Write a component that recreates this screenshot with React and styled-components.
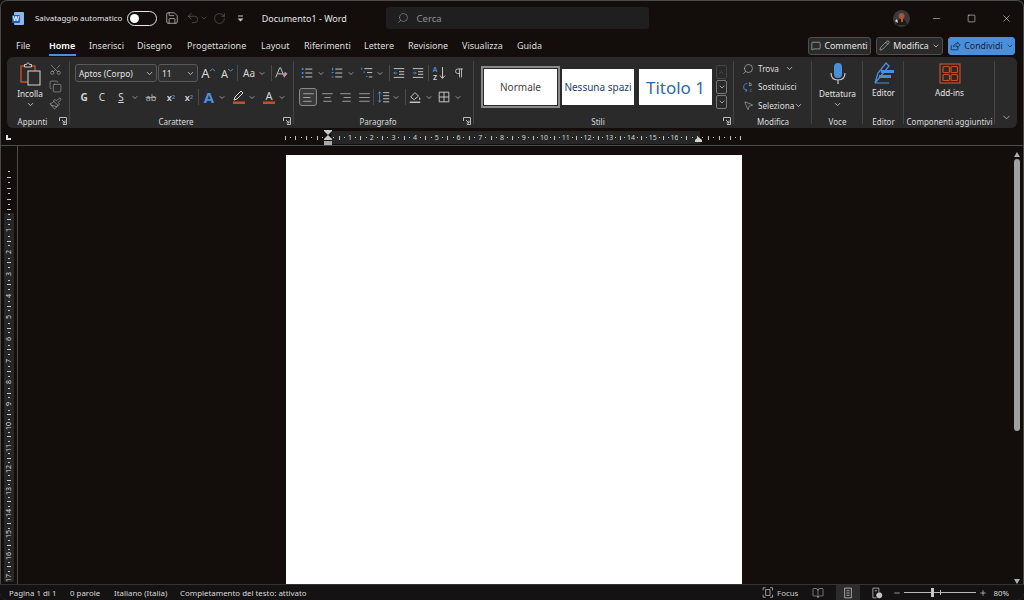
import styled, { createGlobalStyle } from 'styled-components';
import {
  Save, Undo2, RotateCw, Search, Minus, Square, X, MessageSquare, Pencil, ChevronDown,
  Scissors, Copy, Paintbrush, AlignLeft, AlignCenter, AlignRight, AlignJustify, Pilcrow,
  MousePointer2, BookOpen, Plus, ChevronUp,
} from 'lucide-react';

const GlobalStyle = createGlobalStyle`
  html, body { margin: 0; padding: 0; background: #151010; }
  #root { width: 1024px; height: 600px; overflow: hidden; }
  * { box-sizing: border-box; }
`;

const blue = '#4a8fdc';
const rust = '#c4502a';

// ── Window ──────────────────────────────────────────
const Win = styled.div`
  width: 1024px;
  height: 600px;
  display: flex;
  flex-direction: column;
  background: #130d0c;
  color: #e4e4e4;
  font-family: "Noto Sans", "Open Sans", sans-serif;
  font-size: 9px;
  border-radius: 7px;
  box-shadow: inset 0 0 0 1px #4a4a4a;
  overflow: hidden;
`;

// ── Title bar ───────────────────────────────────────
const TitleBar = styled.div`
  height: 36px;
  flex: none;
  display: flex;
  align-items: center;
  padding-left: 12px;
`;

const AutoLabel = styled.span`
  margin-left: 11px;
  width: 92px;
  font-size: 7.9px;
  white-space: nowrap;
`;

const Toggle = styled.div`
  width: 30px;
  height: 15px;
  border: 1px solid #e8e8e8;
  border-radius: 8px;
  padding: 2px 0 0 2px;
  margin-right: 8px;
`;

const Knob = styled.div`
  width: 9px;
  height: 9px;
  border-radius: 50%;
  background: #fff;
`;

const TitleIcon = styled.div`
  width: ${(p) => p.$w || 16}px;
  margin-left: ${(p) => p.$ml || 0}px;
  display: flex;
  align-items: center;
  justify-content: center;
  color: ${(p) => (p.$dim ? '#5c5c5c' : '#c8c8c8')};
`;

const DocTitle = styled.span`
  margin-left: 16px;
  width: 124px;
  white-space: nowrap;
`;

const SearchBox = styled.div`
  width: 264px;
  height: 22px;
  background: #1f1f1f;
  border-radius: 3px;
  display: flex;
  align-items: center;
  gap: 8px;
  padding-left: 11px;
  color: #8f8f8f;
  font-size: 9.5px;
`;

const Avatar = styled.div`
  margin-left: 244px;
  width: 17px;
  height: 17px;
  display: flex;
`;

const WinBtn = styled.div`
  width: 35px;
  margin-left: ${(p) => p.$ml || 0}px;
  display: flex;
  justify-content: center;
  color: #e4e4e4;
`;

// ── Tabs ────────────────────────────────────────────
const TabRow = styled.div`
  height: 21px;
  flex: none;
  display: flex;
  align-items: center;
  padding: 0 9px 2px 16px;
`;

const Tab = styled.span`
  width: ${(p) => p.$w}px;
  font-size: 9px;
  white-space: nowrap;
  position: relative;
  font-weight: ${(p) => (p.$on ? 600 : 400)};
  color: ${(p) => (p.$on ? '#fff' : '#dedede')};
  padding-bottom: 1px;

  ${(p) => p.$on && `
    &::after {
      content: '';
      position: absolute;
      left: 0;
      bottom: -3px;
      width: 27px;
      height: 2px;
      background: ${blue};
    }
  `}
`;

const TabActions = styled.div`
  margin-left: auto;
  display: flex;
  gap: 5px;
`;

const ActionBtn = styled.div`
  width: ${(p) => p.$w}px;
  height: 18px;
  border-radius: 3px;
  display: flex;
  align-items: center;
  justify-content: center;
  gap: 3px;
  font-size: 8.8px;
  background: ${(p) => (p.$primary ? blue : '#2a2a2a')};
  border: 1px solid ${(p) => (p.$primary ? blue : '#4e4e4e')};
  color: ${(p) => (p.$primary ? '#12243a' : '#e4e4e4')};
`;

// ── Ribbon ──────────────────────────────────────────
const Ribbon = styled.div`
  height: 71px;
  flex: none;
  margin: 0 7px;
  background: #2a2a2a;
  border-radius: 6px;
  display: flex;
`;

const Group = styled.div`
  width: ${(p) => p.$w}px;
  flex: none;
  position: relative;
  display: flex;
  flex-direction: column;

  &::after {
    content: '';
    position: absolute;
    right: 0;
    top: 4px;
    bottom: 4px;
    width: 1px;
    background: #454545;
  }
`;

const GroupBody = styled.div`
  height: 57px;
  padding-left: ${(p) => p.$pl || 0}px;
  padding-top: ${(p) => p.$pt ?? 7}px;
  display: flex;
  flex-direction: ${(p) => (p.$row ? 'row' : 'column')};
  gap: ${(p) => p.$gap ?? 6}px;
`;

const GroupLabel = styled.div`
  height: 14px;
  position: relative;
  text-align: center;
  font-size: 8px;
  line-height: 15px;
  padding-right: ${(p) => (p.$launch ? 12 : 0)}px;
  color: #dcdcdc;
  white-space: nowrap;
`;

const Launcher = styled.span`
  position: absolute;
  right: 3px;
  top: 3px;
  display: flex;
  color: #b8b8b8;
`;

const ToolRow = styled.div`
  height: 18px;
  display: flex;
  align-items: center;
`;

const Tool = styled.div`
  width: ${(p) => p.$w || 18}px;
  height: 18px;
  flex: none;
  margin-left: ${(p) => p.$ml || 0}px;
  display: flex;
  align-items: center;
  justify-content: center;
  font-size: ${(p) => p.$fs || 10}px;
  font-weight: ${(p) => p.$fw || 400};
  color: #d6d6d6;
  border-radius: 3px;
  ${(p) => p.$active && 'background: #3a3a3a; border: 1px solid #8a8a8a;'}
`;

const Caret = styled(Tool).attrs({ $w: 8 })`
  color: #c8c8c8;
`;

const VSep = styled.div`
  width: 1px;
  height: ${(p) => p.$h || 16}px;
  flex: none;
  margin-left: ${(p) => p.$l || 0}px;
  margin-right: ${(p) => p.$r || 0}px;
  background: #4a4a4a;
`;

const Combo = styled.div`
  width: ${(p) => p.$w}px;
  height: 18px;
  flex: none;
  margin-right: 1px;
  border: 1px solid #5a5a5a;
  border-radius: 3px;
  background: #2f2f2f;
  display: flex;
  align-items: center;
  justify-content: space-between;
  padding: 0 2px 0 3px;
  font-size: 8.4px;
  white-space: nowrap;
`;

const BigTool = styled.div`
  flex: 1;
  display: flex;
  flex-direction: column;
  align-items: center;
  padding-top: ${(p) => p.$pt ?? 5}px;
  font-size: 8.2px;
  white-space: nowrap;
`;

const BigLabel = styled.span`
  margin-top: ${(p) => p.$mt ?? 1}px;
  line-height: 13px;
`;

const ClipSide = styled.div`
  width: 14px;
  flex: none;
  margin-right: 8px;
  padding-top: 3px;
  display: flex;
  flex-direction: column;
  align-items: center;
  gap: 4px;
  color: #b8b8b8;
`;

const Gallery = styled.div`
  display: flex;
  align-items: center;
  gap: 5px;
`;

const StyleCard = styled.div`
  width: ${(p) => p.$w}px;
  height: 36px;
  background: #fff;
  display: flex;
  align-items: center;
  justify-content: center;
  font-size: ${(p) => p.$fs}px;
  color: ${(p) => p.$c};
  white-space: nowrap;
  overflow: hidden;
  ${(p) => p.$sel && 'outline: 1px solid #2a2a2a; box-shadow: 0 0 0 3px #8b8b8b;'}
`;

const Spinner = styled.div`
  margin-left: -1px;
  width: 11px;
  display: flex;
  flex-direction: column;
  gap: 1px;
`;

const SpinBtn = styled.div`
  height: 14px;
  border: 1px solid ${(p) => (p.$dim ? '#444' : '#7a7a7a')};
  border-radius: 2px;
  display: flex;
  align-items: center;
  justify-content: center;
  color: ${(p) => (p.$dim ? '#666' : '#ddd')};
`;

const EditRow = styled.div`
  height: 18px;
  padding-left: 8px;
  display: flex;
  align-items: center;
  font-size: 8.2px;
  white-space: nowrap;
  gap: 4px;
  color: #dedede;
`;

const EditIcon = styled.span`
  width: 12px;
  display: flex;
  justify-content: center;
  color: #c8c8c8;
`;

const CollapseBtn = styled.div`
  flex: 1;
  display: flex;
  align-items: flex-end;
  justify-content: center;
  padding-bottom: 5px;
  color: #d0d0d0;
`;

// ── Rulers ──────────────────────────────────────────
const HRuler = styled.div`
  margin-top: 2px;
  height: 15px;
  flex: none;
  padding-left: 284.5px;
  position: relative;
  display: flex;
  align-items: stretch;
`;

const CornerMark = styled.span`
  position: absolute;
  left: 6px;
  top: 5px;
  width: 5px;
  height: 5px;
  border-left: 2px solid #ddd;
  border-bottom: 2px solid #ddd;
`;

const LeadTick = styled.i`
  display: block;
  width: 1px;
  height: 4px;
  flex: none;
  margin: 6px 2px 0 0;
  background: #c4c4c4;
`;

const HCell = styled.div`
  width: 21.73px;
  flex: none;
  display: flex;
  align-items: center;
  margin: 1px 0;
  background: ${(p) => (p.$active ? '#262626' : 'transparent')};
`;

const Slot = styled.span`
  flex: 1;
  display: flex;
  align-items: center;
  justify-content: center;
`;

const HTick = styled.i`
  display: block;
  width: 1px;
  height: ${(p) => (p.$tall ? 4 : 1)}px;
  background: #c4c4c4;
`;

const RulerNum = styled.span`
  font-size: 7px;
  line-height: 8px;
  color: #d6d6d6;
  white-space: nowrap;
`;

const IndentMark = styled.svg`
  position: absolute;
  left: ${(p) => p.$x}px;
  top: 0;
`;

const Rule = styled.div`
  height: 1px;
  flex: none;
  background: #4c4c4c;
`;

const Workspace = styled.div`
  flex: 1;
  min-height: 0;
  display: flex;
`;

const VRuler = styled.div`
  width: 18px;
  flex: none;
  border-right: 1px solid #4c4c4c;
  padding-top: 23.2px;
  overflow: hidden;
  display: flex;
  flex-direction: column;
  align-items: flex-start;
`;

const VCell = styled.div`
  height: 21.73px;
  width: 10px;
  flex: none;
  margin-left: 4px;
  display: flex;
  flex-direction: column;
  background: ${(p) => (p.$active ? '#262626' : 'transparent')};
`;

const VTick = styled.i`
  display: block;
  height: 1px;
  width: ${(p) => (p.$tall ? 4 : 2)}px;
  background: #c4c4c4;
`;

const VNum = styled(RulerNum)`
  transform: rotate(-90deg);
`;

const Canvas = styled.div`
  flex: 1;
  padding: 9px 0 0 268px;
  overflow: hidden;
`;

const Page = styled.div`
  width: 456px;
  height: 100%;
  background: #fff;
`;

const Scroll = styled.div`
  width: 8px;
  flex: none;
  margin-right: 3px;
  padding-top: 6px;
  display: flex;
  flex-direction: column;
  align-items: center;
`;

const ScrollArrow = styled.span`
  width: 0;
  height: 0;
  flex: none;
  border-left: 3px solid transparent;
  border-right: 3px solid transparent;
  ${(p) => (p.$down ? 'border-top: 5px solid #b0b0b0;' : 'border-bottom: 5px solid #b0b0b0;')}
`;

const ScrollThumb = styled.div`
  width: 6px;
  height: 272px;
  margin-top: 2px;
  border-radius: 3px;
  background: #a0a0a0;
`;

const ScrollGap = styled.div`
  flex: 1;
`;

// ── Status bar ──────────────────────────────────────
const StatusBar = styled.div`
  height: 16px;
  flex: none;
  display: flex;
  align-items: center;
  padding-left: 9px;
  font-size: 7.9px;
  color: #d8d8d8;
  background: #141212;
  border-top: 1px solid #333;
`;

const StatusText = styled.span`
  width: ${(p) => p.$w}px;
  white-space: nowrap;
`;

const StatusRight = styled.div`
  margin-left: auto;
  display: flex;
  align-items: center;
  height: 100%;
  padding-right: 15px;
`;

const StatusIcon = styled.div`
  width: ${(p) => p.$w || 24}px;
  height: 100%;
  margin-left: ${(p) => p.$ml || 0}px;
  display: flex;
  align-items: center;
  justify-content: center;
  gap: 3px;
  color: #c8c8c8;
  background: ${(p) => (p.$on ? '#2c2c2c' : 'transparent')};
`;

const Slider = styled.div`
  width: 72px;
  height: 1px;
  margin: 0 3px;
  background: #b8b8b8;
  position: relative;
`;

const SliderThumb = styled.span`
  position: absolute;
  left: 27px;
  top: -4px;
  width: 3px;
  height: 9px;
  background: #c8c8c8;
`;

const SliderMid = styled.span`
  position: absolute;
  left: 36px;
  top: -2px;
  width: 1px;
  height: 5px;
  background: #b8b8b8;
`;

const ZoomPct = styled.span`
  margin-left: 6px;
`;

// ── Drawn icons ─────────────────────────────────────
const Ico = ({ s = 14, vb = 16, children }) => (
  <svg width={s} height={s} viewBox={`0 0 ${vb} ${vb}`} fill="none" stroke="currentColor" strokeWidth="1">
    {children}
  </svg>
);

const WordLogo = () => (
  <svg width="12" height="13" viewBox="0 0 12 13">
    <rect x="2" y="0" width="10" height="13" rx="1" fill="#8db8ee" />
    <rect x="0" y="3" width="8" height="8" rx="1" fill="#1f5cb5" />
    <text x="4" y="9.4" fontSize="6.5" fontWeight="700" fill="#fff" textAnchor="middle" fontFamily="Noto Sans">W</text>
  </svg>
);

const AvatarPic = () => (
  <svg width="17" height="17" viewBox="0 0 17 17">
    <circle cx="8.5" cy="8.5" r="8.5" fill="#3a3838" />
    <circle cx="8.5" cy="6" r="3" fill="#8a5a46" />
    <path d="M3 15c1-5 3-6 5.5-6s4.500 1 5.500 6z" fill="#1c1a1a" />
    <path d="M8 4h2v8H8z" fill="#c4502a" />
    <path d="M2 11l2-2 1 4z" fill="#e8e8e8" />
  </svg>
);

const CustomizeIcon = () => (
  <Ico s={9} vb={9}>
    <path d="M2 2h5" />
    <path d="M1.500 4.500h6l-3 3z" fill="currentColor" stroke="none" />
  </Ico>
);

const ShareIcon = () => (
  <Ico s={12}>
    <path d="M3 7v6h9V9" />
    <path d="M6 9c0-3 2-4 5-4V3l4 3.500L11 10V8c-2 0-4 0-5 1z" />
  </Ico>
);

const PasteIcon = () => (
  <svg width="22" height="24" viewBox="0 0 22 24" fill="none">
    <path d="M2 4h14v16H2z" stroke={rust} strokeWidth="1.400" fill="#2e2a28" />
    <path d="M5.500 5V2.500h2c0-2 3-2 3 0h2V5z" stroke="#d0d0d0" strokeWidth="1" fill="#2a2a2a" />
    <rect x="9" y="9" width="12" height="14" fill="#2a2a2a" stroke="#d6d6d6" />
  </svg>
);

const GrowIcon = ({ up }) => (
  <Tool $fs={up ? 13 : 11}>
    A
    <svg width="5" height="4" viewBox="0 0 5 4" style={{ marginBottom: 7 }}>
      <path d={up ? 'M0 3l2.500-2L5 3' : 'M0 1l2.500 2L5 1'} stroke={blue} fill="none" />
    </svg>
  </Tool>
);

const ClearIcon = () => (
  <Ico>
    <path d="M2 13L6.500 2h1L12 13M4 9h6" />
    <path d="M10 10l3-3 2 2-3 3z" fill="#c58aa8" stroke="#c58aa8" />
  </Ico>
);

const Lines = ({ rows }) => rows.map((r) => <path key={r[1]} d={`M${r[0]} ${r[1]}H${r[2]}`} />);

const BulletsIcon = () => (
  <Ico>
    <rect x="2" y="2.500" width="2" height="2" fill={blue} stroke="none" />
    <rect x="2" y="7" width="2" height="2" fill={blue} stroke="none" />
    <rect x="2" y="11.500" width="2" height="2" fill={blue} stroke="none" />
    <Lines rows={[[6, 3.500, 14], [6, 8, 14], [6, 12.500, 14]]} />
  </Ico>
);

const NumberedIcon = () => (
  <Ico>
    <path d="M3 2v3M2 7.500h2M2 12.500h2" stroke={blue} strokeWidth="1.200" />
    <Lines rows={[[6, 3.500, 14], [6, 8, 14], [6, 12.500, 14]]} />
  </Ico>
);

const MultiIcon = () => (
  <Ico>
    <path d="M2 2v2M4 7h1.500M7 12h1.500" stroke={blue} strokeWidth="1.200" />
    <Lines rows={[[5, 3, 14], [8, 7.500, 14], [10, 12.500, 14]]} />
  </Ico>
);

const IndentIcon = ({ grow }) => (
  <Ico>
    <Lines rows={[[2, 3, 14], [8, 6.500, 14], [8, 9.500, 14], [2, 13, 14]]} />
    <path d={grow ? 'M2 8h4M4.500 6.500L6 8 4.500 9.500' : 'M6 8H2M3.500 6.500L2 8l1.500 1.500'} stroke={blue} />
  </Ico>
);

const SortIcon = () => (
  <svg width="16" height="16" viewBox="0 0 16 16" fill="none">
    <text x="4" y="7" fontSize="7" fontWeight="600" fill={blue} textAnchor="middle" fontFamily="Noto Sans">A</text>
    <text x="4" y="15" fontSize="7" fontWeight="600" fill="#d6d6d6" textAnchor="middle" fontFamily="Noto Sans">Z</text>
    <path d="M11.500 2v11M9 10.500l2.500 3 2.500-3" stroke="#c8c8c8" />
  </svg>
);

const SpacingIcon = () => (
  <Ico>
    <path d="M3 2v12M1.500 4L3 2l1.500 2M1.500 12L3 14l1.500-2" stroke={blue} />
    <Lines rows={[[7, 3, 14], [7, 6.500, 14], [7, 10, 14], [7, 13.500, 14]]} />
  </Ico>
);

const ShadeIcon = () => (
  <Ico>
    <path d="M3 8l5-5 4 4-5 4z" />
    <path d="M13 8c1 1.500 1.500 2 1 3s-2 0-1-3z" fill="#c8c8c8" stroke="none" />
    <path d="M2 14h12" strokeWidth="1.500" />
  </Ico>
);

const BordersIcon = () => (
  <Ico>
    <path d="M2.500 2.500h11v11h-11zM8 2.500v11M2.500 8h11" />
  </Ico>
);

const TextEffects = () => (
  <Tool $fs={15} $fw={700} style={{ color: blue }}>A</Tool>
);

const ColorA = ({ bar, mark }) => (
  <svg width="16" height="16" viewBox="0 0 16 16" fill="none">
    {mark ? (
      <path d="M3 11l3-1 6-6-2-2-6 6z" stroke="#d6d6d6" />
    ) : (
      <text x="8" y="10.500" fontSize="11" fill="#d6d6d6" textAnchor="middle" fontFamily="Noto Sans">A</text>
    )}
    <rect x="2" y="12.500" width="12" height="2.500" fill={bar} />
  </svg>
);

const StrikeIcon = () => (
  <Tool $ml={3} $fs={9} style={{ textDecoration: 'line-through', color: '#a8a8a8' }}>ab</Tool>
);

const ReplaceIcon = () => (
  <svg width="14" height="14" viewBox="0 0 14 14" fill="none">
    <text x="8" y="6" fontSize="6" fill="#c8c8c8" fontFamily="Noto Sans">b</text>
    <text x="9" y="13" fontSize="6" fill={blue} fontFamily="Noto Sans">c</text>
    <path d="M6 3C3 3 2 5 2 7s1 4 4 4M4 9.500L6 11 4 12.500" stroke={blue} />
  </svg>
);

const MicIcon = () => (
  <svg width="20" height="24" viewBox="0 0 20 24" fill="none">
    <rect x="6" y="1" width="8" height="15" rx="4" fill={blue} />
    <path d="M3 11c0 5 3 7 7 7s7-2 7-7M10 18v4" stroke="#c8c8c8" strokeWidth="1.200" />
  </svg>
);

const EditorIcon = () => (
  <svg width="22" height="22" viewBox="0 0 22 22" fill="none">
    <path d="M2 21L5 11 13 1l3 3-9 11z" stroke={blue} strokeWidth="1.300" />
    <path d="M8 8h13v3H8zM6 13h12v3H6z" fill={blue} />
    <path d="M2 21h14" stroke={blue} />
  </svg>
);

const AddInsIcon = () => (
  <svg width="22" height="21" viewBox="0 0 22 21" fill="none" stroke={rust} strokeWidth="1.200">
    <rect x="1" y="1" width="20" height="19" />
    <rect x="4" y="3.500" width="6.500" height="6" rx="1" />
    <rect x="12" y="3.500" width="6.500" height="6" rx="1" />
    <rect x="4" y="11.500" width="6.500" height="6" rx="1" />
    <rect x="12" y="11.500" width="6.500" height="6" rx="1" />
  </svg>
);

const LauncherIcon = () => (
  <Launcher>
    <svg width="8" height="8" viewBox="0 0 8 8" fill="none" stroke="currentColor">
      <path d="M.5 4V.5H7.500V7.500H4M3 3l3 3M6 3.500V6H3.500" />
    </svg>
  </Launcher>
);

const FocusIcon = () => (
  <Ico s={13}>
    <path d="M1.500 5V1.500H5M11 1.500h3.500V5M1.500 11v3.500H5M11 14.500h3.500V11" />
    <path d="M5 4h6v8H5z" />
  </Ico>
);

const PrintIcon = () => (
  <Ico s={12}>
    <path d="M3.500 1.500h9v13h-9zM6 5h4M6 8h4M6 11h4" />
  </Ico>
);

const WebIcon = () => (
  <Ico s={12}>
    <path d="M2.500 1.500h8v5M2.500 1.500v13h5M5 5h3" />
    <circle cx="11" cy="11" r="3.500" fill="currentColor" />
  </Ico>
);

const Chev = () => (
  <Caret><ChevronDown size={9} strokeWidth={2} /></Caret>
);

const Caret2 = ({ ml }) => (
  <Caret $ml={ml}><ChevronDown size={9} strokeWidth={2} /></Caret>
);

// ── Data ────────────────────────────────────────────
const tabs = [
  ['Home', 40, true], ['Inserisci', 48], ['Disegno', 50], ['Progettazione', 74], ['Layout', 43],
  ['Riferimenti', 60], ['Lettere', 44], ['Revisione', 54], ['Visualizza', 55], ['Guida', 40],
];

const hCells = [
  ...[-1, 0].map((n) => ({ n, active: false, label: '' })),
  ...Array.from({ length: 17 }, (_, i) => ({ n: i + 1, active: true, label: i < 16 ? i + 1 : '' })),
  ...[18, 19].map((n) => ({ n, active: false, label: '' })),
];

const vCells = [
  ...[-1, 0].map((n) => ({ n, active: false, label: '' })),
  ...Array.from({ length: 17 }, (_, i) => ({ n: i + 1, active: true, label: i + 1 })),
];

const App = () => (
  <Win>
    <GlobalStyle />

    <TitleBar>
      <WordLogo />
      <AutoLabel>Salvataggio automatico</AutoLabel>
      <Toggle><Knob /></Toggle>
      <TitleIcon $w={14}><Save size={14} strokeWidth={1.3} /></TitleIcon>
      <TitleIcon $w={14} $ml={7} $dim><Undo2 size={14} strokeWidth={1.3} /></TitleIcon>
      <TitleIcon $w={8} $dim><ChevronDown size={8} /></TitleIcon>
      <TitleIcon $w={14} $ml={5} $dim><RotateCw size={13} strokeWidth={1.3} /></TitleIcon>
      <TitleIcon $w={10} $ml={9}><CustomizeIcon /></TitleIcon>
      <DocTitle>Documento1 - Word</DocTitle>
      <SearchBox>
        <Search size={12} strokeWidth={1.3} style={{ transform: 'scaleX(-1)' }} />
        Cerca
      </SearchBox>
      <Avatar><AvatarPic /></Avatar>
      <WinBtn $ml={9}><Minus size={11} strokeWidth={1.2} /></WinBtn>
      <WinBtn><Square size={9} strokeWidth={1.5} /></WinBtn>
      <WinBtn><X size={11} strokeWidth={1.3} /></WinBtn>
    </TitleBar>

    <TabRow>
      <Tab $w={33}>File</Tab>
      {tabs.map(([name, w, on]) => <Tab key={name} $w={w} $on={on}>{name}</Tab>)}
      <TabActions>
        <ActionBtn $w={63}><MessageSquare size={10} strokeWidth={1.3} />Commenti</ActionBtn>
        <ActionBtn $w={67}><Pencil size={11} strokeWidth={1.2} />Modifica<ChevronDown size={8} /></ActionBtn>
        <ActionBtn $w={67} $primary><ShareIcon />Condividi<ChevronDown size={8} /></ActionBtn>
      </TabActions>
    </TabRow>

    <Ribbon>
      <Group $w={63}>
        <GroupBody $row $gap={0} $pt={3} $pl={5}>
          <BigTool $pt={2}>
            <PasteIcon />
            <BigLabel $mt={1}>Incolla</BigLabel>
            <ChevronDown size={9} strokeWidth={2} />
          </BigTool>
          <ClipSide>
            <Scissors size={13} strokeWidth={1} style={{ transform: 'rotate(-90deg)' }} />
            <Copy size={13} strokeWidth={1} />
            <Paintbrush size={13} strokeWidth={1.1} />
          </ClipSide>
        </GroupBody>
        <GroupLabel $launch>Appunti<LauncherIcon /></GroupLabel>
      </Group>

      <Group $w={224}>
        <GroupBody $pl={5}>
          <ToolRow>
            <Combo $w={82}>Aptos (Corpo)<ChevronDown size={9} /></Combo>
            <Combo $w={40}>11<ChevronDown size={9} /></Combo>
            <GrowIcon up />
            <Tool $w={1} />
            <GrowIcon />
            <VSep $l={1} $r={2} />
            <Tool $fs={10}>Aa</Tool>
            <Chev />
            <VSep $l={5} />
            <Tool><ClearIcon /></Tool>
          </ToolRow>
          <ToolRow>
            <Tool $fw={700}>G</Tool>
            <Tool>C</Tool>
            <Tool $w={20} style={{ textDecoration: 'underline' }}>S</Tool>
            <Chev />
            <StrikeIcon />
            <Tool $ml={2} $fs={9} $fw={600}>x<sub style={{ fontSize: 6, color: blue }}>2</sub></Tool>
            <Tool $fs={9} $fw={600}>x<sup style={{ fontSize: 6, color: blue }}>2</sup></Tool>
            <VSep $r={1} />
            <TextEffects />
            <Chev />
            <Tool $ml={4}><ColorA bar={rust} mark /></Tool>
            <Chev />
            <Tool $ml={4}><ColorA bar={rust} /></Tool>
            <Chev />
          </ToolRow>
        </GroupBody>
        <GroupLabel $launch>Carattere<LauncherIcon /></GroupLabel>
      </Group>

      <Group $w={180}>
        <GroupBody $pl={4}>
          <ToolRow>
            <Tool><BulletsIcon /></Tool>
            <Caret2 ml={1} />
            <Tool $ml={3}><NumberedIcon /></Tool>
            <Caret2 ml={1} />
            <Tool $ml={3}><MultiIcon /></Tool>
            <Chev />
            <VSep $l={5} />
            <Tool><IndentIcon /></Tool>
            <Tool $ml={1}><IndentIcon grow /></Tool>
            <VSep $l={1} />
            <Tool $ml={1}><SortIcon /></Tool>
            <Tool $ml={2}><Pilcrow size={12} strokeWidth={1.6} /></Tool>
          </ToolRow>
          <ToolRow>
            <Tool $ml={1} $active><AlignLeft size={13} strokeWidth={1.2} /></Tool>
            <Tool $ml={1}><AlignCenter size={13} strokeWidth={1.2} /></Tool>
            <Tool><AlignRight size={13} strokeWidth={1.2} /></Tool>
            <Tool $ml={1}><AlignJustify size={13} strokeWidth={1.2} /></Tool>
            <VSep />
            <Tool $ml={1}><SpacingIcon /></Tool>
            <Caret2 ml={-1} />
            <VSep $l={5} />
            <Tool><ShadeIcon /></Tool>
            <Caret2 ml={1} />
            <Tool $ml={2}><BordersIcon /></Tool>
            <Caret2 ml={1} />
          </ToolRow>
        </GroupBody>
        <GroupLabel $launch>Paragrafo<LauncherIcon /></GroupLabel>
      </Group>

      <Group $w={260}>
        <GroupBody $pl={10} $pt={8} $gap={0}>
          <Gallery>
            <StyleCard $w={73} $fs={10} $c="#444" $sel>Normale</StyleCard>
            <StyleCard $w={72} $fs={10} $c="#1f3f66">Nessuna spazi</StyleCard>
            <StyleCard $w={73} $fs={17} $c="#2f6aa8">Titolo 1</StyleCard>
            <Spinner>
              <SpinBtn $dim><ChevronUp size={7} /></SpinBtn>
              <SpinBtn><ChevronDown size={8} /></SpinBtn>
              <SpinBtn><ChevronDown size={8} /></SpinBtn>
            </Spinner>
          </Gallery>
        </GroupBody>
        <GroupLabel $launch>Stili<LauncherIcon /></GroupLabel>
      </Group>

      <Group $w={78}>
        <GroupBody $pt={3} $gap={1}>
          <EditRow><EditIcon><Search size={12} strokeWidth={1.2} style={{ transform: 'scaleX(-1)' }} /></EditIcon>Trova<ChevronDown size={9} style={{ marginLeft: 2 }} /></EditRow>
          <EditRow><EditIcon><ReplaceIcon /></EditIcon>Sostituisci</EditRow>
          <EditRow><EditIcon><MousePointer2 size={11} strokeWidth={1.2} /></EditIcon>Seleziona<ChevronDown size={9} style={{ marginLeft: -4 }} /></EditRow>
        </GroupBody>
        <GroupLabel>Modifica</GroupLabel>
      </Group>

      <Group $w={51}>
        <GroupBody $pt={5} $gap={0}>
          <BigTool $pt={0}>
            <MicIcon />
            <BigLabel $mt={1}>Dettatura</BigLabel>
            <ChevronDown size={9} strokeWidth={2} />
          </BigTool>
        </GroupBody>
        <GroupLabel>Voce</GroupLabel>
      </Group>

      <Group $w={41}>
        <GroupBody $pt={5} $gap={0}>
          <BigTool $pt={0}>
            <EditorIcon />
            <BigLabel $mt={2}>Editor</BigLabel>
          </BigTool>
        </GroupBody>
        <GroupLabel>Editor</GroupLabel>
      </Group>

      <Group $w={91}>
        <GroupBody $pt={6} $gap={0}>
          <BigTool $pt={0}>
            <AddInsIcon />
            <BigLabel $mt={2}>Add-ins</BigLabel>
          </BigTool>
        </GroupBody>
        <GroupLabel>Componenti aggiuntivi</GroupLabel>
      </Group>

      <CollapseBtn><ChevronDown size={11} strokeWidth={1.6} /></CollapseBtn>
    </Ribbon>

    <HRuler>
      <CornerMark />
      <LeadTick />
      {hCells.map((c) => (
        <HCell key={c.n} $active={c.active}>
          <Slot><HTick /></Slot>
          <Slot><HTick $tall /></Slot>
          <Slot><HTick /></Slot>
          <Slot>{c.label ? <RulerNum>{c.label}</RulerNum> : <HTick $tall />}</Slot>
        </HCell>
      ))}
      <IndentMark $x={323} width="10" height="15" viewBox="0 0 10 15">
        <path d="M1 0h8v1L5 5 1 1zM5 5l4 4v1H1V9z" fill="#c8c8c8" />
        <rect x="1" y="11" width="8" height="4" fill="#a8a8a8" />
      </IndentMark>
      <IndentMark $x={694} width="9" height="15" viewBox="0 0 9 15">
        <path d="M4.500 7L8 10v2H1v-2z" fill="#d4d4d4" />
      </IndentMark>
    </HRuler>
    <Rule />

    <Workspace>
      <VRuler>
        {vCells.map((c) => (
          <VCell key={c.n} $active={c.active}>
            <Slot><VTick /></Slot>
            <Slot><VTick $tall /></Slot>
            <Slot><VTick /></Slot>
            <Slot>{c.label ? <VNum>{c.label}</VNum> : <VTick $tall />}</Slot>
          </VCell>
        ))}
      </VRuler>
      <Canvas><Page /></Canvas>
      <Scroll>
        <ScrollArrow />
        <ScrollThumb />
        <ScrollGap />
        <ScrollArrow $down />
      </Scroll>
    </Workspace>

    <StatusBar>
      <StatusText $w={61}>Pagina 1 di 1</StatusText>
      <StatusText $w={44}>0 parole</StatusText>
      <StatusText $w={66}>Italiano (Italia)</StatusText>
      <StatusText $w={140}>Completamento del testo: attivato</StatusText>
      <StatusRight>
        <StatusIcon $w={36}><FocusIcon />Focus</StatusIcon>
        <StatusIcon $ml={8}><BookOpen size={12} strokeWidth={1.1} /></StatusIcon>
        <StatusIcon $ml={6} $on><PrintIcon /></StatusIcon>
        <StatusIcon $ml={5}><WebIcon /></StatusIcon>
        <Minus size={8} style={{ marginLeft: 4 }} />
        <Slider><SliderMid /><SliderThumb /></Slider>
        <Plus size={8} />
        <ZoomPct>80%</ZoomPct>
      </StatusRight>
    </StatusBar>
  </Win>
);

export default App;
